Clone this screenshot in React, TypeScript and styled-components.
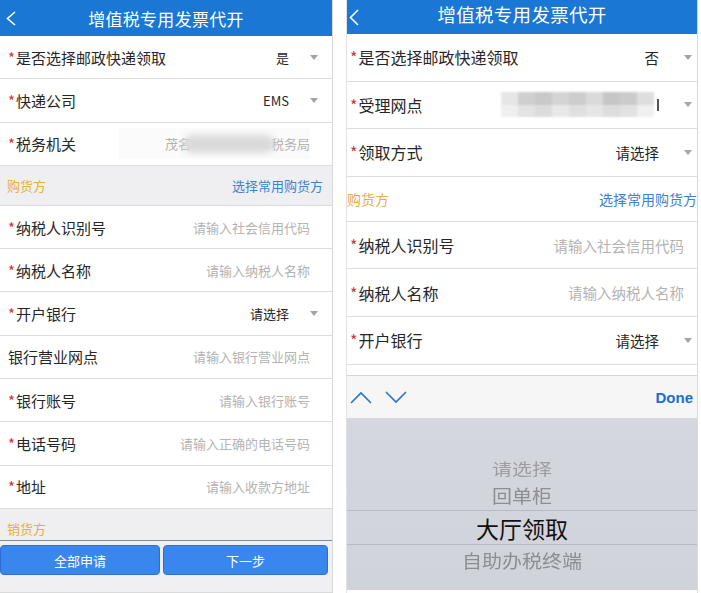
import React from "react";
import styled, { createGlobalStyle, ThemeProvider } from "styled-components";

const GlobalStyle = createGlobalStyle`
  html, body {
    margin: 0;
    padding: 0;
    background: #fff;
  }
  body {
    font-family: "Noto Sans CJK SC", "Noto Sans", sans-serif;
  }
`;

// per-screenshot metrics, the right one is captured a little larger
const leftTheme = {
  headH: 36,
  titleSize: 17,
  titleShift: 0,
  backPad: 6,
  rowH: 43.3,
  labelSize: 15,
  valueSize: 13,
  padL: 8,
  padR: 14,
  caretGap: 21,
  sectionH: 40,
  sectionBg: "#efeff1",
  sectionPadL: 7,
  sectionPadR: 9,
  sectionSize: 13,
};

const rightTheme = {
  headH: 34,
  titleSize: 18.5,
  titleShift: 6,
  backPad: 2,
  rowH: 47.6,
  labelSize: 16,
  valueSize: 14.5,
  padL: 3,
  padR: 5,
  caretGap: 25,
  sectionH: 45,
  sectionBg: "#fff",
  sectionPadL: 0,
  sectionPadR: 0,
  sectionSize: 14,
};

type Field =
  | { kind: "select"; label: string; value: string; required?: boolean }
  | { kind: "input"; label: string; hint: string; required?: boolean };

const Page = styled.div`
  width: 701px;
  height: 593px;
  display: flex;
  gap: 13px;
  background: #fff;
  overflow: hidden;
`;

const Phone = styled.div<{ $w: number; $edge?: boolean }>`
  width: ${({ $w }) => $w}px;
  height: 593px;
  box-sizing: border-box;
  display: flex;
  flex-direction: column;
  border-right: 1px solid #dadada;
  border-left: ${({ $edge }) => ($edge ? "1px solid #e2e2e2" : "none")};
  border-bottom: ${({ $edge }) => ($edge ? "none" : "1px solid #dadada")};
  background: #fff;
  overflow: hidden;
`;

const Header = styled.header`
  height: ${(p) => p.theme.headH}px;
  flex-shrink: 0;
  background: #1a77d3;
  color: #fff;
  display: grid;
  grid-template-columns: 40px 1fr 40px;
  align-items: center;
`;

const BackButton = styled.div`
  display: flex;
  align-items: center;
  padding-left: ${(p) => p.theme.backPad}px;
`;

const Title = styled.h1`
  margin: 0;
  padding-bottom: ${(p) => p.theme.titleShift}px;
  text-align: center;
  font-size: ${(p) => p.theme.titleSize}px;
  font-weight: 400;
  letter-spacing: 0.3px;
`;

const Content = styled.div`
  flex: 1;
  overflow: hidden;
`;

const Row = styled.div`
  height: ${(p) => p.theme.rowH}px;
  box-sizing: border-box;
  display: flex;
  align-items: center;
  padding: 0 ${(p) => p.theme.padR}px 0 ${(p) => p.theme.padL}px;
  border-bottom: 1px solid #dcdcdc;
  background: #fff;
`;

const Label = styled.span`
  flex-shrink: 0;
  font-size: ${(p) => p.theme.labelSize}px;
  color: #262626;
`;

const Star = styled.span`
  color: #d2323b;
  margin-right: 1px;
`;

const Hint = styled.span`
  margin-left: auto;
  margin-right: 8px;
  font-size: ${(p) => p.theme.valueSize}px;
  color: #b3b3b3;
  white-space: nowrap;
`;

const Value = styled.span`
  margin-left: auto;
  font-size: ${(p) => p.theme.valueSize}px;
  color: #262626;
`;

const Caret = styled.span`
  width: 0;
  height: 0;
  margin-left: ${(p) => p.theme.caretGap}px;
  border-left: 4px solid transparent;
  border-right: 4px solid transparent;
  border-top: 5px solid #a4a4a4;
`;

const Masked = styled.span`
  margin-left: auto;
  margin-right: 8px;
  display: flex;
  align-items: center;
  font-size: ${(p) => p.theme.valueSize}px;
  color: #b3b3b3;
  background: #fbfbfb;
  padding: 6px 0 6px 46px;
`;

const Smudge = styled.span<{ $w: number }>`
  display: inline-block;
  width: ${({ $w }) => $w}px;
  height: 18px;
  margin: 0 -4px 0 -8px;
  border-radius: 9px;
  background: #dadada;
  filter: blur(3px);
`;

const Mosaic = styled.span`
  margin-left: auto;
  display: grid;
  grid-template-columns: repeat(9, 17px);
  grid-template-rows: 13px 12px;
  filter: blur(0.8px);
`;

const Tile = styled.span<{ $c: string }>`
  background: ${({ $c }) => $c};
`;

const MosaicEdge = styled.span`
  width: 2px;
  height: 12px;
  margin-left: 3px;
  background: #555;
`;

const Section = styled.div`
  height: ${(p) => p.theme.sectionH}px;
  box-sizing: border-box;
  display: flex;
  align-items: center;
  justify-content: space-between;
  padding: 0 ${(p) => p.theme.sectionPadR}px 0 ${(p) => p.theme.sectionPadL}px;
  background: ${(p) => p.theme.sectionBg};
  border-bottom: 1px solid #dcdcdc;
  font-size: ${(p) => p.theme.sectionSize}px;
`;

const SectionTitle = styled.span`
  color: #eeac3b;
`;

const SectionLink = styled.span`
  color: #3b82d2;
  white-space: nowrap;
`;

const Footer = styled.footer`
  flex-shrink: 0;
  display: flex;
  gap: 3px;
  padding: 4px 0 17px;
  border-top: 1px solid #7d8ba2;
  background: #f0f0f2;
`;

const FooterButton = styled.button<{ $w: number }>`
  width: ${({ $w }) => $w}px;
  height: 30px;
  border: 1px solid #2c6fd6;
  border-radius: 4px;
  background: #3a86ef;
  color: #fff;
  font-family: inherit;
  font-size: 13px;
  padding: 0;
`;

const Toolbar = styled.div`
  height: 43px;
  flex-shrink: 0;
  box-sizing: border-box;
  display: flex;
  align-items: center;
  gap: 13px;
  padding: 0 4px 0 3px;
  background: #f6f6f7;
  border-top: 1px solid #d6d6d8;
`;

const Done = styled.span`
  margin-left: auto;
  font-family: "Liberation Sans", Arial, sans-serif;
  font-weight: 700;
  font-size: 15px;
  color: #1c6fd0;
`;

const Picker = styled.div`
  height: 172px;
  margin-bottom: 3px;
  flex-shrink: 0;
  box-sizing: border-box;
  padding-top: 36px;
  display: flex;
  flex-direction: column;
  align-items: center;
  background: linear-gradient(#d4d7dd, #d0d4da);
`;

const PickerItem = styled.div<{ $tone: "far" | "near" }>`
  height: 28px;
  line-height: 28px;
  font-size: 20px;
  color: ${({ $tone }) => ($tone === "far" ? "#9c9ea3" : "#8c8e94")};
  transform: scaleY(${({ $tone }) => ($tone === "far" ? 0.82 : 0.9)});
`;

const PickerBand = styled.div`
  width: 100%;
  height: 35px;
  box-sizing: border-box;
  border-top: 1px solid #b7bac1;
  border-bottom: 1px solid #b7bac1;
  display: flex;
  align-items: center;
  justify-content: center;
  font-size: 23px;
  color: #111;
`;

const PickerTail = styled.div`
  height: 32px;
  line-height: 32px;
  font-size: 20px;
  color: #8c8e94;
  transform: scaleY(0.92);
`;

const BackIcon = ({ h }: { h: number }) => (
  <svg width={10} height={h} viewBox={`0 0 10 ${h}`}>
    <polyline
      points={`9,1 1.5,${h / 2} 9,${h - 1}`}
      fill="none"
      stroke="#fff"
      strokeWidth={1.6}
    />
  </svg>
);

const Chevron = ({ up }: { up?: boolean }) => (
  <svg width={22} height={13} viewBox="0 0 22 13">
    <polyline
      points={up ? "1,12 11,2 21,12" : "1,1 11,11 21,1"}
      fill="none"
      stroke="#2b72c9"
      strokeWidth={1.6}
    />
  </svg>
);

const FieldRow = ({ field }: { field: Field }) => (
  <Row>
    <Label>
      {field.required !== false && <Star>*</Star>}
      {field.label}
    </Label>
    {field.kind === "select" ? (
      <>
        <Value>{field.value}</Value>
        <Caret />
      </>
    ) : (
      <Hint>{field.hint}</Hint>
    )}
  </Row>
);

const buyerFields: Field[] = [
  { kind: "input", label: "纳税人识别号", hint: "请输入社会信用代码" },
  { kind: "input", label: "纳税人名称", hint: "请输入纳税人名称" },
  { kind: "select", label: "开户银行", value: "请选择" },
];

const leftMore: Field[] = [
  { kind: "input", label: "银行营业网点", hint: "请输入银行营业网点", required: false },
  { kind: "input", label: "银行账号", hint: "请输入银行账号" },
  { kind: "input", label: "电话号码", hint: "请输入正确的电话号码" },
  { kind: "input", label: "地址", hint: "请输入收款方地址" },
];

const mosaicShades = [
  "#e6e6e6", "#cfcfcf", "#c9c9c9", "#d4d4d4", "#cdcdcd", "#dadada", "#c6c6c6", "#cbcbcb", "#dedede",
  "#efefef", "#e3e3e3", "#dcdcdc", "#e8e8e8", "#e0e0e0", "#e6e6e6", "#dddddd", "#e2e2e2", "#f0f0f0",
];

const LeftScreen = () => (
  <ThemeProvider theme={leftTheme}>
    <Phone $w={333}>
      <Header>
        <BackButton>
          <BackIcon h={15} />
        </BackButton>
        <Title>增值税专用发票代开</Title>
      </Header>
      <Content>
        <FieldRow field={{ kind: "select", label: "是否选择邮政快递领取", value: "是" }} />
        <FieldRow field={{ kind: "select", label: "快递公司", value: "EMS" }} />
        <Row>
          <Label>
            <Star>*</Star>税务机关
          </Label>
          <Masked>
            茂名
            <Smudge $w={92} />
            税务局
          </Masked>
        </Row>
        <Section>
          <SectionTitle>购货方</SectionTitle>
          <SectionLink>选择常用购货方</SectionLink>
        </Section>
        {buyerFields.concat(leftMore).map((f) => (
          <FieldRow key={f.label} field={f} />
        ))}
        <Section>
          <SectionTitle>销货方</SectionTitle>
        </Section>
      </Content>
      <Footer>
        <FooterButton $w={160}>全部申请</FooterButton>
        <FooterButton $w={165}>下一步</FooterButton>
      </Footer>
    </Phone>
  </ThemeProvider>
);

const RightScreen = () => (
  <ThemeProvider theme={rightTheme}>
    <Phone $w={352} $edge>
      <Header>
        <BackButton>
          <BackIcon h={17} />
        </BackButton>
        <Title>增值税专用发票代开</Title>
      </Header>
      <Content>
        <FieldRow field={{ kind: "select", label: "是否选择邮政快递领取", value: "否" }} />
        <Row>
          <Label>
            <Star>*</Star>受理网点
          </Label>
          <Mosaic>
            {mosaicShades.map((c, i) => (
              <Tile key={i} $c={c} />
            ))}
          </Mosaic>
          <MosaicEdge />
          <Caret />
        </Row>
        <FieldRow field={{ kind: "select", label: "领取方式", value: "请选择" }} />
        <Section>
          <SectionTitle>购货方</SectionTitle>
          <SectionLink>选择常用购货方</SectionLink>
        </Section>
        {buyerFields.map((f) => (
          <FieldRow key={f.label} field={f} />
        ))}
      </Content>
      <Toolbar>
        <Chevron up />
        <Chevron />
        <Done>Done</Done>
      </Toolbar>
      <Picker>
        <PickerItem $tone="far">请选择</PickerItem>
        <PickerItem $tone="near">回单柜</PickerItem>
        <PickerBand>大厅领取</PickerBand>
        <PickerTail>自助办税终端</PickerTail>
      </Picker>
    </Phone>
  </ThemeProvider>
);

const App = () => (
  <>
    <GlobalStyle />
    <Page>
      <LeftScreen />
      <RightScreen />
    </Page>
  </>
);

export default App;
